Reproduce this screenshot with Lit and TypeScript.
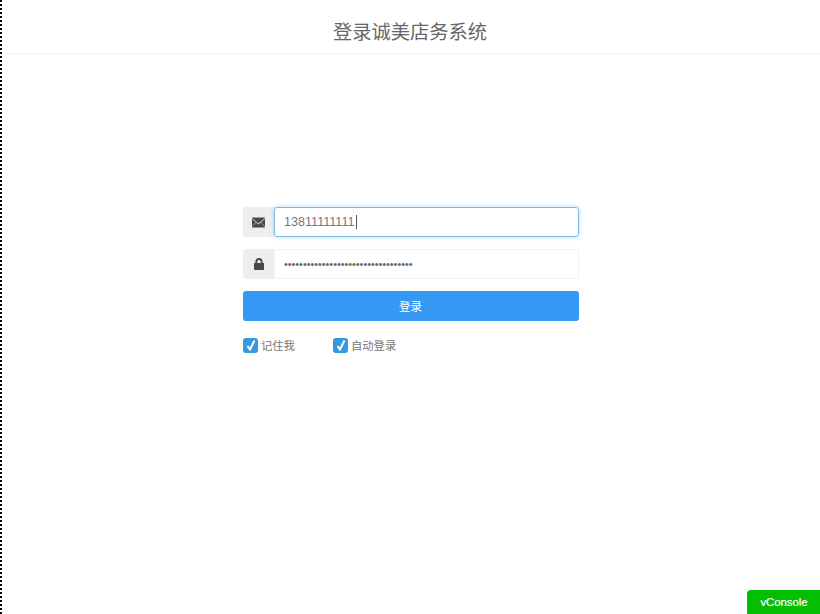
import { LitElement, html, css } from "lit";
import { customElement } from "lit/decorators.js";

@customElement("app-root")
export class AppRoot extends LitElement {
  static styles = css`
    :host {
      display: block;
      position: relative;
      height: 614px;
      overflow: hidden;
      background: #fff;
      font-family: "Liberation Sans", "Noto Sans CJK SC", sans-serif;
      box-sizing: border-box;
      border-left: 2px dotted #000;
    }
    .head {
      box-sizing: content-box;
      height: 44px;
      padding: 9px 2px 0 0;
      border-bottom: 1px solid #f3f3f3;
      display: flex;
      align-items: center;
      justify-content: center;
      font-size: 19.25px;
      color: #666;
    }
    .form {
      width: 336px;
      margin: 153px 0 0 241px;
      display: flex;
      flex-direction: column;
    }
    .row {
      display: flex;
      height: 30px;
      margin-bottom: 12px;
    }
    .addon {
      width: 31px;
      flex: none;
      background: #eee;
      display: flex;
      align-items: center;
      justify-content: center;
      border-radius: 3px 0 0 3px;
    }
    .addon svg { fill: #484848; }
    .mail { width: 13px; height: 13px; }
    .lock { width: 12px; height: 12px; }
    .field {
      flex: 1;
      box-sizing: border-box;
      border: 1px solid #f3f3f3;
      border-radius: 0 3px 3px 0;
      padding-left: 9px;
      display: flex;
      align-items: center;
      font-size: 12.6px;
      color: #777;
    }
    .field.focus {
      border-color: #7db8e8;
      border-radius: 3px;
      box-shadow: 0 0 4px rgba(102, 175, 233, 0.5);
    }
    .dots { font-size: 10.8px; color: #666; }
    .caret { width: 1px; height: 14px; background: #555; margin-left: 1px; }
    .btn {
      height: 30px;
      background: #3399f3;
      color: #fff;
      border-radius: 3px;
      font-size: 11.5px;
      padding-right: 1px;
      display: flex;
      align-items: center;
      justify-content: center;
    }
    .checks {
      display: flex;
      margin-top: 16px;
      font-size: 11.3px;
      color: #777;
    }
    .check { display: flex; align-items: center; gap: 3px; }
    .check.first { width: 90px; }
    .box {
      width: 15px;
      height: 15px;
      border-radius: 3px;
      background: #3399e0;
      display: flex;
      align-items: center;
      justify-content: center;
    }
    .box svg { width: 12px; height: 12px; fill: none; stroke: #fff; stroke-width: 2; }
    .vc {
      position: absolute;
      right: 0;
      bottom: 0;
      width: 72px;
      height: 24px;
      padding-left: 1px;
      background: #04be02;
      color: #fff;
      font-size: 11.3px;
      -webkit-text-stroke: 0.2px #fff;
      border-radius: 4px 0 0 0;
      display: flex;
      align-items: center;
      justify-content: center;
    }
  `;

  private check() {
    return html`<span class="box"><svg viewBox="0 0 12 12"><path d="M2.500 7 L5 10.500 L9.500 1.500"></path></svg></span>`;
  }

  render() {
    return html`
      <div class="head">登录诚美店务系统</div>
      <div class="form">
        <div class="row">
          <div class="addon">
            <svg class="mail" viewBox="0 0 13 13"><path d="M0 1.500h13v.5L6.500 7.500 0 2zM0 2.800l4 3.400L0 10.500zM13 2.800v7.700L9 6.200zM4.300 6.500l2.200 1.900 2.200-1.900 4.300 4.500v.5H0v-.5z"></path></svg>
          </div>
          <div class="field focus">13811111111<span class="caret"></span></div>
        </div>
        <div class="row">
          <div class="addon">
            <svg class="lock" viewBox="0 0 12 12"><path d="M1 5h1.400V3.700a3.600 3.600 0 0 1 7.200 0V5H11v6.300a.7.7 0 0 1-.7.7H1.700a.7.7 0 0 1-.7-.7zM4.200 5h3.600V3.700a1.800 1.800 0 0 0-3.600 0z"></path></svg>
          </div>
          <div class="field"><span class="dots">••••••••••••••••••••••••••••••••••</span></div>
        </div>
        <div class="btn">登录</div>
        <div class="checks">
          <div class="check first">${this.check()}记住我</div>
          <div class="check">${this.check()}自动登录</div>
        </div>
      </div>
      <div class="vc">vConsole</div>
    `;
  }
}
